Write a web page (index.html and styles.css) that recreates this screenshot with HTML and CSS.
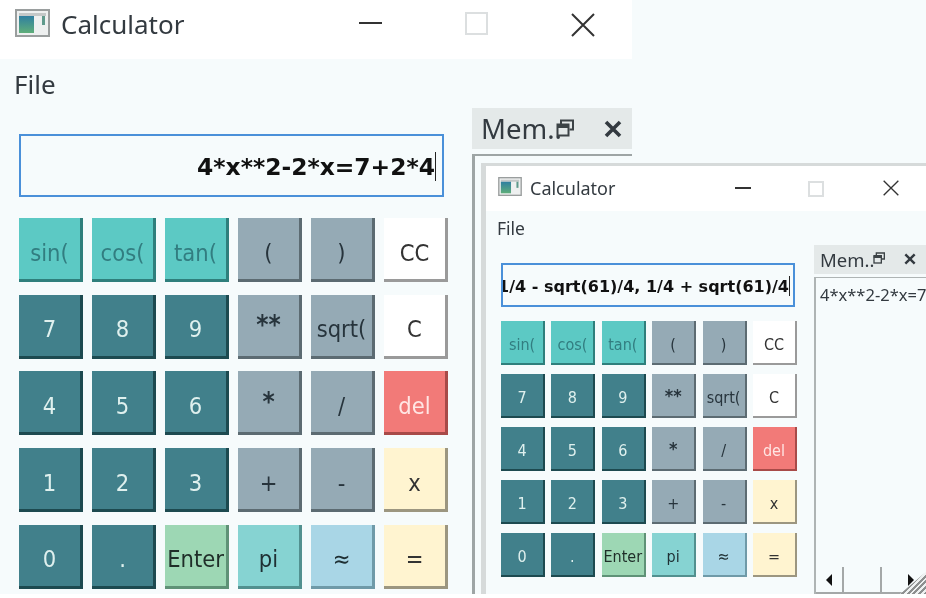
FILE: index.html
```html
<!DOCTYPE html>
<html lang="en">
<head>
    <meta charset="UTF-8">
    <meta name="viewport" content="width=device-width, initial-scale=1.0">
    <title>Calculator</title>
    <link rel="stylesheet" href="styles.css">
</head>
<body>
    <svg class="icon-defs" width="0" height="0">
        <defs>
            <linearGradient id="appFill" x1="0" y1="0" x2="0" y2="1">
                <stop offset="0" stop-color="#2f7fa0"/>
                <stop offset="1" stop-color="#5fae7a"/>
            </linearGradient>
            <symbol id="appIcon" viewBox="0 0 35 28">
                <rect x="1" y="1" width="33" height="26" fill="#eef0f0" stroke="#9a9e9e" stroke-width="2"/>
                <rect x="4" y="4" width="27" height="3" fill="#c4c8c8"/>
                <rect x="4" y="7" width="15" height="17" fill="url(#appFill)"/>
                <rect x="27" y="7" width="3" height="9" fill="#5f9a8c"/>
            </symbol>
            <symbol id="floatIcon" viewBox="0 0 18 18">
                <path d="M5 5V1.5H17V10.5H13.5" fill="none" stroke="#3c4346" stroke-width="2"/>
                <rect x="1.5" y="5.5" width="11" height="11" fill="none" stroke="#3c4346" stroke-width="2"/>
                <path d="M1 7.5H13" stroke="#3c4346" stroke-width="3"/>
            </symbol>
            <symbol id="dockCloseIcon" viewBox="0 0 18 18">
                <path d="M2 2L16 16M16 2L2 16" fill="none" stroke="#333a40" stroke-width="3.6"/>
            </symbol>
        </defs>
    </svg>

    <div class="desktop">
        <!-- main calculator window -->
        <div class="window main-window">
            <div class="title-bar">
                <svg class="app-icon"><use href="#appIcon"/></svg>
                <span class="title-text">Calculator</span>
                <span class="win-btn win-min"></span>
                <span class="win-btn win-max"></span>
                <svg class="win-close" viewBox="0 0 24 24"><path d="M1 1L23 23M23 1L1 23"/></svg>
            </div>
            <div class="menu-bar">File</div>
            <div class="window-body">
                <div class="calc">
                    <div class="display"><span>4*x**2-2*x=7+2*4</span><i class="caret"></i></div>
                    <div class="keys">
                        <button class="key fn">sin(</button>
                        <button class="key fn">cos(</button>
                        <button class="key fn">tan(</button>
                        <button class="key op">(</button>
                        <button class="key op">)</button>
                        <button class="key plain">CC</button>
                        <button class="key num">7</button>
                        <button class="key num">8</button>
                        <button class="key num">9</button>
                        <button class="key op star">**</button>
                        <button class="key op">sqrt(</button>
                        <button class="key plain">C</button>
                        <button class="key num">4</button>
                        <button class="key num">5</button>
                        <button class="key num">6</button>
                        <button class="key op star">*</button>
                        <button class="key op">/</button>
                        <button class="key del">del</button>
                        <button class="key num">1</button>
                        <button class="key num">2</button>
                        <button class="key num">3</button>
                        <button class="key op">+</button>
                        <button class="key op">-</button>
                        <button class="key cream">x</button>
                        <button class="key num">0</button>
                        <button class="key num">.</button>
                        <button class="key enter">Enter</button>
                        <button class="key pi">pi</button>
                        <button class="key approx">≈</button>
                        <button class="key cream">=</button>
                    </div>
                </div>
                <div class="dock">
                    <div class="dock-title">
                        <span class="dock-name">Mem..</span>
                        <svg class="dock-float"><use href="#floatIcon"/></svg>
                        <svg class="dock-close"><use href="#dockCloseIcon"/></svg>
                    </div>
                    <div class="dock-box"></div>
                </div>
            </div>
        </div>

        <!-- second window, sitting on top of the memory dock -->
        <div class="window small-window">
            <div class="title-bar">
                <svg class="app-icon"><use href="#appIcon"/></svg>
                <span class="title-text">Calculator</span>
                <span class="win-btn win-min"></span>
                <span class="win-btn win-max"></span>
                <svg class="win-close" viewBox="0 0 24 24"><path d="M1 1L23 23M23 1L1 23"/></svg>
            </div>
            <div class="menu-bar">File</div>
            <div class="window-body">
                <div class="calc">
                    <div class="display"><span>1/4 - sqrt(61)/4, 1/4 + sqrt(61)/4</span><i class="caret"></i></div>
                    <div class="keys">
                        <button class="key fn">sin(</button>
                        <button class="key fn">cos(</button>
                        <button class="key fn">tan(</button>
                        <button class="key op">(</button>
                        <button class="key op">)</button>
                        <button class="key plain">CC</button>
                        <button class="key num">7</button>
                        <button class="key num">8</button>
                        <button class="key num">9</button>
                        <button class="key op star">**</button>
                        <button class="key op">sqrt(</button>
                        <button class="key plain">C</button>
                        <button class="key num">4</button>
                        <button class="key num">5</button>
                        <button class="key num">6</button>
                        <button class="key op star">*</button>
                        <button class="key op">/</button>
                        <button class="key del">del</button>
                        <button class="key num">1</button>
                        <button class="key num">2</button>
                        <button class="key num">3</button>
                        <button class="key op">+</button>
                        <button class="key op">-</button>
                        <button class="key cream">x</button>
                        <button class="key num">0</button>
                        <button class="key num">.</button>
                        <button class="key enter">Enter</button>
                        <button class="key pi">pi</button>
                        <button class="key approx">≈</button>
                        <button class="key cream">=</button>
                    </div>
                </div>
                <div class="dock">
                    <div class="dock-title">
                        <span class="dock-name">Mem..</span>
                        <svg class="dock-float"><use href="#floatIcon"/></svg>
                        <svg class="dock-close"><use href="#dockCloseIcon"/></svg>
                    </div>
                    <div class="dock-box">
                        <div class="dock-text">4*x**2-2*x=7+2*4</div>
                        <div class="scrollbar">
                            <span class="arrow arrow-left"></span>
                            <span class="thumb"></span>
                            <span class="arrow arrow-right"></span>
                        </div>
                        <span class="grip"></span>
                    </div>
                </div>
            </div>
        </div>
    </div>
</body>
</html>
```

FILE: styles.css
```css
html, body {
    margin: 0;
    height: 598px;
    overflow: hidden;
    background-color: #fff;
    font-family: "Noto Sans", sans-serif;
}
.icon-defs {
    position: absolute;
}
/* the screenshot is a soft, rescaled capture */
.desktop {
    position: relative;
    height: 594px;
    overflow: hidden;
    background-color: #f6fbfc;
    filter: blur(0.4px);
}

/* shared window parts */
.title-bar {
    display: flex;
    align-items: center;
    background-color: #fff;
    color: #333a40;
}
.win-btn {
    display: block;
    box-sizing: border-box;
}
.win-min {
    background-color: #333;
}
.win-max {
    border: 2px solid #dcdfe0;
}
.win-close path {
    fill: none;
    stroke: #333;
    stroke-width: 2;
}
.display {
    display: flex;
    justify-content: flex-end;
    align-items: center;
    box-sizing: border-box;
    overflow: hidden;
    white-space: nowrap;
    border: 2px solid #4a90d9;
    font-family: "DejaVu Sans", sans-serif;
    font-weight: bold;
    color: #111;
}
.caret {
    flex: none;
    width: 1px;
    background-color: #222;
}
.keys {
    display: grid;
}
.key {
    box-sizing: border-box;
    border-style: solid;
    border-color: transparent;
    font-family: "DejaVu Sans", sans-serif;
    font-stretch: condensed;
    white-space: nowrap;
    overflow: hidden;
}
.star {
    font-weight: bold;
}
.fn {
    background-color: #5cc9c4;
    border-right-color: #2f7f7c;
    border-bottom-color: #2f7f7c;
    color: #327d80;
}
.num {
    background-color: #41808b;
    border-right-color: #1d4a50;
    border-bottom-color: #1d4a50;
    color: #dff0ee;
}
.op {
    background-color: #95aab5;
    border-right-color: #5c6b72;
    border-bottom-color: #5c6b72;
    color: #27343c;
}
.plain {
    background-color: #fff;
    border-right-color: #9a9a9a;
    border-bottom-color: #9a9a9a;
    color: #333;
}
.del {
    background-color: #f27a78;
    border-right-color: #a84a48;
    border-bottom-color: #a84a48;
    color: #ffe6e4;
}
.cream {
    background-color: #fff4d0;
    border-right-color: #9c9680;
    border-bottom-color: #9c9680;
    color: #333;
}
.enter {
    background-color: #9dd7b4;
    border-right-color: #5f9277;
    border-bottom-color: #5f9277;
    color: #1f2d28;
}
.pi {
    background-color: #86d3d2;
    border-right-color: #52908f;
    border-bottom-color: #52908f;
    color: #1f3034;
}
.approx {
    background-color: #a9d6e6;
    border-right-color: #6f9aa8;
    border-bottom-color: #6f9aa8;
    color: #1f3034;
}
.dock-title {
    display: flex;
    align-items: center;
    box-sizing: border-box;
    background-color: #e4e9e9;
    color: #333a40;
}
.dock-box {
    position: relative;
    box-sizing: border-box;
}

/* big window */
.main-window {
    width: 632px;
}
.main-window .title-bar {
    height: 59px;
    padding-left: 15px;
}
.main-window .app-icon {
    width: 35px;
    height: 28px;
    margin-right: 11px;
    margin-top: -14px;
}
.main-window .title-text {
    width: 298px;
    font-size: 26px;
    margin-top: -12px;
}
.main-window .win-min {
    width: 23px;
    height: 2px;
    margin-right: 83px;
    margin-top: -13px;
}
.main-window .win-max {
    width: 23px;
    height: 23px;
    margin-right: 83px;
    margin-top: -12px;
}
.main-window .win-close {
    width: 24px;
    height: 24px;
    margin-top: -10px;
}
.main-window .menu-bar {
    height: 49px;
    padding: 10px 0 0 14px;
    box-sizing: border-box;
    font-size: 26px;
    line-height: 30px;
    color: #333a40;
}
.window-body {
    display: flex;
}
.main-window .window-body {
    padding-left: 19px;
}
.main-window .calc {
    width: 453px;
    padding-top: 26px;
}
.main-window .display {
    width: 425px;
    height: 63px;
    padding-right: 6px;
    padding-top: 2px;
    font-size: 23.4px;
}
.main-window .caret {
    height: 29px;
}
.main-window .keys {
    margin-top: 21px;
    grid-template-columns: repeat(6, 64px);
    grid-auto-rows: 64px;
    column-gap: 9px;
    row-gap: 12.7px;
}
.main-window .key {
    padding: 8px 0 0;
    font-size: 23.5px;
    border-width: 0 3px 3px 0;
}
.main-window .star {
    padding-top: 0;
    font-size: 26px;
}
.main-window .dock {
    width: 160px;
}
.main-window .dock-title {
    height: 41px;
    padding-left: 9px;
}
.main-window .dock-name {
    width: 75px;
    font-size: 27.5px;
}
.main-window .dock-float {
    width: 18px;
    height: 18px;
    margin-top: -2px;
}
.main-window .dock-close {
    width: 18px;
    height: 18px;
    margin-left: 30px;
}
.main-window .dock-box {
    margin-top: 5px;
    height: 440px;
    border-top: 2px solid #9ea5a5;
    border-left: 3px solid #9ea5a5;
}

/* small window, lies over the big one */
.small-window {
    position: absolute;
    left: 481px;
    top: 163px;
    right: 0;
    bottom: 0;
    background-color: #f6fbfc;
    border-top: 3px solid #d6dada;
    border-left: 5px solid #d6dada;
}
.small-window .title-bar {
    height: 45px;
    padding-left: 12px;
}
.small-window .app-icon {
    width: 24px;
    height: 19px;
    margin-right: 8px;
    margin-top: -4px;
}
.small-window .title-text {
    width: 205px;
    font-size: 18px;
    margin-top: -2px;
}
.small-window .win-min {
    width: 16px;
    height: 2px;
    margin-right: 57px;
    margin-top: -2px;
}
.small-window .win-max {
    width: 16px;
    height: 16px;
    margin-right: 59px;
}
.small-window .win-close {
    width: 16px;
    height: 16px;
    margin-top: -2px;
}
.small-window .menu-bar {
    height: 34px;
    padding: 5px 0 0 11px;
    box-sizing: border-box;
    font-size: 17.5px;
    line-height: 24px;
    color: #333a40;
}
.small-window .window-body {
    padding-left: 15px;
}
.small-window .calc {
    width: 313px;
    padding-top: 18px;
}
.small-window .display {
    width: 294px;
    height: 44px;
    padding-right: 3px;
    padding-top: 2px;
    font-size: 16px;
}
.small-window .caret {
    height: 20px;
}
.small-window .keys {
    margin-top: 14px;
    grid-template-columns: repeat(6, 44px);
    grid-auto-rows: 44px;
    column-gap: 6.4px;
    row-gap: 9.1px;
}
.small-window .key {
    padding: 4px 0 0;
    font-size: 16px;
    border-width: 0 2px 2px 0;
}
.small-window .star {
    padding-top: 0;
    font-size: 18px;
}
.small-window .dock {
    width: 112px;
}
.small-window .dock-title {
    height: 29px;
    padding-left: 6px;
}
.small-window .dock-name {
    width: 53px;
    font-size: 18.5px;
}
.small-window .dock-float {
    width: 12px;
    height: 12px;
    margin-top: -3px;
}
.small-window .dock-close {
    width: 12px;
    height: 12px;
    margin-left: 19px;
    margin-top: -1px;
}
.small-window .dock-box {
    margin-top: 3px;
    height: 317px;
    overflow: hidden;
    border-top: 1px solid #aeb4b4;
    border-left: 2px solid #aeb4b4;
}
.dock-text {
    padding: 5px 0 0 4px;
    font-size: 16.5px;
    white-space: nowrap;
    color: #333a40;
}
.scrollbar {
    position: absolute;
    left: 0;
    right: 0;
    bottom: 0;
    height: 26px;
    display: flex;
    align-items: center;
    box-sizing: border-box;
    border-bottom: 2px solid #a4a8a8;
}
.arrow {
    display: block;
    width: 0;
    height: 0;
    border-top: 6px solid transparent;
    border-bottom: 6px solid transparent;
}
.arrow-left {
    margin-left: 10px;
    border-right: 6px solid #111;
}
.thumb {
    height: 26px;
    width: 40px;
    margin-left: 10px;
    box-sizing: border-box;
    border-left: 2px solid #a4a8a8;
    border-right: 2px solid #a4a8a8;
}
.arrow-right {
    margin-left: 26px;
    border-left: 6px solid #111;
}
.grip {
    position: absolute;
    right: 0;
    bottom: 0;
    width: 26px;
    height: 22px;
    clip-path: polygon(100% 0, 100% 100%, 0 100%);
    background: repeating-linear-gradient(135deg, #8d9090 0 2px, #eef1f1 2px 4px);
}
```
